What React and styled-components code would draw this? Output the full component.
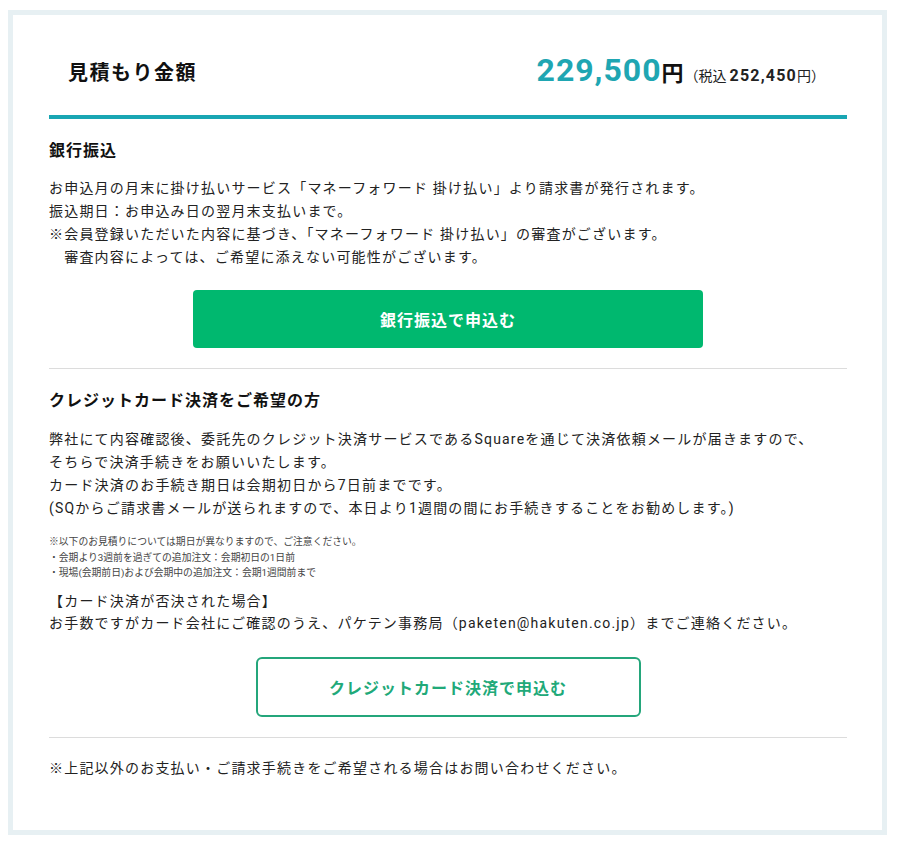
import React from "react";
import styled, { createGlobalStyle } from "styled-components";

const GlobalStyle = createGlobalStyle`
  body {
    margin: 0;
    background: #fff;
    font-family: Roboto, "Noto Sans CJK JP", sans-serif;
    color: #222;
  }
`;

const Page = styled.div`
  padding: 10px 10px 9px 8px;
`;

const Card = styled.div`
  border: 5px solid #e7f0f3;
  background: #fff;
  padding: 0 35px 50px 36px;
`;

const Header = styled.div`
  display: flex;
  align-items: center;
  justify-content: space-between;
  padding: 39px 22px 23px 19px;
  border-bottom: 4px solid #19a6b3;
`;

const Title = styled.h1`
  margin: 0;
  font-size: 20px;
  letter-spacing: 1.5px;
  font-weight: 700;
  color: #111;
  line-height: 32px;
`;

const Price = styled.div`
  display: flex;
  align-items: baseline;
  line-height: 32px;
`;

const Amount = styled.span`
  font-size: 32px;
  font-weight: 700;
  letter-spacing: 1px;
  color: #1fa6b2;
`;

const Yen = styled.span`
  font-size: 22px;
  font-weight: 700;
  color: #111;
  margin-right: 1px;
`;

const Tax = styled.span`
  font-size: 14px;
  color: #222;
  b {
    font-size: 16px;
    font-weight: 700;
    letter-spacing: 1.2px;
    margin-left: 3px;
  }
`;

const Section = styled.section`
  padding: 20px 0 20px;
  border-bottom: 1px solid #dcdcdc;
`;

const Heading = styled.h2`
  margin: 0;
  font-size: 16px;
  letter-spacing: 1px;
  font-weight: 700;
  line-height: 24px;
  color: #111;
`;

const Para = styled.p`
  margin: ${(p) => p.$top || 0}px 0 0;
  font-size: 14px;
  letter-spacing: 1.2px;
  line-height: ${(p) => p.$lh || 23}px;
  white-space: pre-line;
`;

const Notes = styled.p`
  margin: 14.5px 0 0;
  font-size: 9.8px;
  line-height: 15.5px;
  color: #444;
  white-space: pre-line;
`;

const ButtonRow = styled.div`
  display: flex;
  justify-content: center;
  margin-top: ${(p) => p.$top}px;
`;

const Button = styled.button`
  width: ${(p) => p.$width}px;
  height: ${(p) => (p.$outline ? 60 : 58)}px;
  border-radius: ${(p) => (p.$outline ? 6 : 4)}px;
  border: ${(p) => (p.$outline ? "2px solid #24a67b" : "none")};
  background: ${(p) => (p.$outline ? "#fff" : "#00b86f")};
  color: ${(p) => (p.$outline ? "#21a979" : "#fff")};
  font-family: Roboto, "Noto Sans CJK JP", sans-serif;
  font-size: 16px;
  font-weight: 700;
  letter-spacing: 1px;
  cursor: pointer;
`;

const Footer = styled.p`
  margin: 19px 0 0;
  font-size: 14px;
  letter-spacing: 1.2px;
  line-height: 23px;
`;

export default function App() {
  return (
    <>
      <GlobalStyle />
      <Page>
        <Card>
          <Header>
            <Title>見積もり金額</Title>
            <Price>
              <Amount>229,500</Amount>
              <Yen>円</Yen>
              <Tax>
                （税込<b>252,450</b>円）
              </Tax>
            </Price>
          </Header>

          <Section>
            <Heading>銀行振込</Heading>
            <Para $top={13.5}>
              {"お申込月の月末に掛け払いサービス「マネーフォワード 掛け払い」より請求書が発行されます。\n振込期日：お申込み日の翌月末支払いまで。\n※会員登録いただいた内容に基づき、「マネーフォワード 掛け払い」の審査がございます。\n　審査内容によっては、ご希望に添えない可能性がございます。"}
            </Para>
            <ButtonRow $top={21.5}>
              <Button $width={510}>銀行振込で申込む</Button>
            </ButtonRow>
          </Section>

          <Section>
            <Heading>クレジットカード決済をご希望の方</Heading>
            <Para $top={14.5}>
              {"弊社にて内容確認後、委託先のクレジット決済サービスであるSquareを通じて決済依頼メールが届きますので、\nそちらで決済手続きをお願いいたします。\nカード決済のお手続き期日は会期初日から7日前までです。\n(SQからご請求書メールが送られますので、本日より1週間の間にお手続きすることをお勧めします。)"}
            </Para>
            <Notes>
              {"※以下のお見積りについては期日が異なりますので、ご注意ください。\n・会期より3週前を過ぎての追加注文：会期初日の1日前\n・現場(会期前日)および会期中の追加注文：会期1週間前まで"}
            </Notes>
            <Para $top={9} $lh={22}>
              {"【カード決済が否決された場合】\nお手数ですがカード会社にご確認のうえ、パケテン事務局（paketen@hakuten.co.jp）までご連絡ください。"}
            </Para>
            <ButtonRow $top={23}>
              <Button $outline $width={385}>
                クレジットカード決済で申込む
              </Button>
            </ButtonRow>
          </Section>

          <Footer>
            ※上記以外のお支払い・ご請求手続きをご希望される場合はお問い合わせください。
          </Footer>
        </Card>
      </Page>
    </>
  );
}
